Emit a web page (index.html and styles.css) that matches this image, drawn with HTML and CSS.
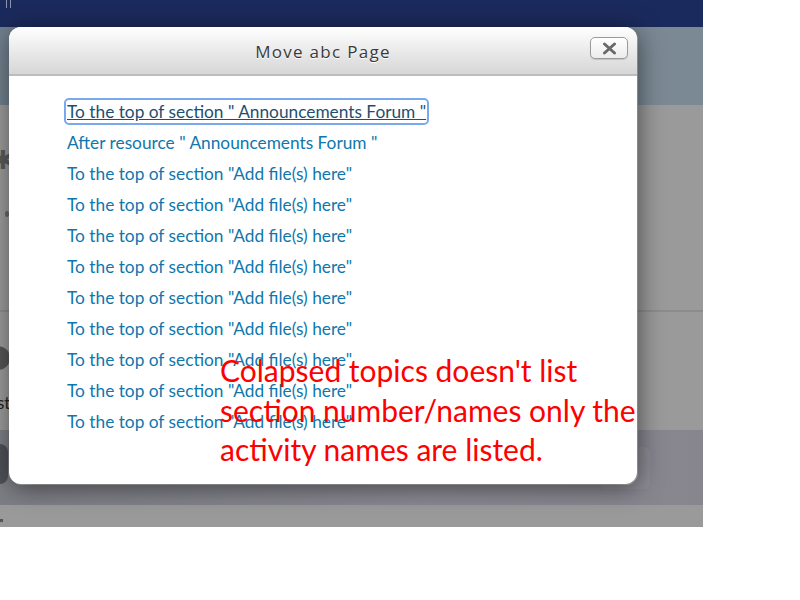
FILE: index.html
```html
<!DOCTYPE html>
<html lang="en">
<head>
    <meta charset="UTF-8">
    <title>Move abc Page</title>
    <link rel="stylesheet" href="styles.css">
</head>
<body>
    <div class="page">
        <div class="navbar"><span class="nav-mark"></span></div>
        <div class="banner"></div>
        <div class="course">
            <div class="course-row">
                <span class="gear">✱</span>
                <span class="dot"></span>
            </div>
            <div class="course-row second">
                <span class="blob"></span>
                <span class="st">st</span>
            </div>
        </div>
        <div class="footer-band">
            <span class="blob dark"></span>
            <span class="ghost-btn"></span>
        </div>
        <div class="footer-end"><span class="tiny-dot"></span></div>
    </div>

    <div class="dialog">
        <div class="dialog-header">
            <h1>Move abc Page</h1>
            <button class="close-btn">
                <svg width="15" height="13" viewBox="0 0 15 13"><path d="M2.5 2 L12.5 11 M12.5 2 L2.5 11" stroke="#6a6a6a" stroke-width="3" stroke-linecap="round"/></svg>
            </button>
        </div>
        <ul class="move-list">
            <li><a href="#" class="focused">To the top of section " Announcements Forum "</a></li>
            <li><a href="#">After resource " Announcements Forum "</a></li>
            <li><a href="#">To the top of section "Add file(s) here"</a></li>
            <li><a href="#">To the top of section "Add file(s) here"</a></li>
            <li><a href="#">To the top of section "Add file(s) here"</a></li>
            <li><a href="#">To the top of section "Add file(s) here"</a></li>
            <li><a href="#">To the top of section "Add file(s) here"</a></li>
            <li><a href="#">To the top of section "Add file(s) here"</a></li>
            <li><a href="#">To the top of section "Add file(s) here"</a></li>
            <li><a href="#">To the top of section "Add file(s) here"</a></li>
            <li><a href="#">To the top of section "Add file(s) here"</a></li>
        </ul>
    </div>

    <div class="note">Colapsed topics doesn't list<br>section number/names only the<br>activity names are listed.</div>
</body>
</html>
```

FILE: styles.css
```css
body {
    margin: 0;
    background: #fff;
    font-family: Lato, "Open Sans", sans-serif;
}
.page {
    width: 703px;
    height: 527px;
    display: flex;
    flex-direction: column;
    background: #9a9a9a;
    overflow: hidden;
}
.navbar {
    height: 27px;
    background: #1b2a5c;
    position: relative;
}
.nav-mark {
    display: block;
    width: 3px;
    height: 8px;
    margin-left: 6px;
    border-left: 1px solid #8a93b0;
    border-right: 1px solid #8a93b0;
}
.banner {
    height: 78px;
    background: linear-gradient(90deg, #6f7f8c, #7b8a97 60%, #7b8994);
}
.course {
    flex: 1;
    display: flex;
    flex-direction: column;
}
.course-row {
    height: 205px;
    border-bottom: 2px solid #8c8c8c;
    position: relative;
}
.course-row.second {
    height: auto;
    flex: 1;
    border-bottom: none;
}
.gear {
    position: absolute;
    left: -8px;
    top: 38px;
    font-size: 26px;
    color: #5a5a5a;
}
.dot {
    position: absolute;
    left: 5px;
    top: 106px;
    width: 4px;
    height: 6px;
    border-radius: 50%;
    background: #666;
}
.blob {
    position: absolute;
    left: -14px;
    top: 34px;
    width: 24px;
    height: 24px;
    border-radius: 50%;
    background: #555;
}
.st {
    position: absolute;
    left: -3px;
    top: 80px;
    font-size: 17px;
    color: #222;
}
.footer-band {
    height: 75px;
    background: linear-gradient(90deg, #7d7d85, #8a8993 60%, #87868f);
    position: relative;
}
.blob.dark {
    top: 14px;
    left: -12px;
    width: 20px;
    height: 40px;
    border-radius: 8px;
    background: #505058;
}
.ghost-btn {
    position: absolute;
    left: 600px;
    top: 17px;
    width: 50px;
    height: 42px;
    border-radius: 6px;
    background: #8d8c95;
}
.footer-end {
    height: 22px;
    background: #9a9a9a;
    position: relative;
}
.tiny-dot {
    position: absolute;
    left: 0;
    top: 14px;
    width: 3px;
    height: 3px;
    background: #555;
}

.dialog {
    position: absolute;
    left: 9px;
    top: 27px;
    width: 628px;
    height: 457px;
    background: #fff;
    border-radius: 12px;
    box-shadow: 2px 4px 24px rgba(0, 0, 0, 0.5), 1px 1px 0 #bbb;
    overflow: hidden;
}
.dialog-header {
    height: 47px;
    background: linear-gradient(#ffffff, #d6d6d6);
    border-bottom: 2px solid #bdbdbd;
    display: flex;
    align-items: center;
    justify-content: center;
    position: relative;
}
.dialog-header h1 {
    margin: 2px 0 0;
    font-family: "Open Sans", sans-serif;
    font-size: 17px;
    font-weight: normal;
    letter-spacing: 1.3px;
    color: #3a3a3a;
    text-shadow: 0 1px 0 #fff;
}
.close-btn {
    position: absolute;
    right: 9px;
    top: 10px;
    width: 38px;
    height: 22px;
    border: 1px solid #9a9a9a;
    border-radius: 5px;
    background: linear-gradient(#fff, #ececec);
    box-shadow: inset 0 1px 0 #fff, 0 1px 1px rgba(0,0,0,0.15);
    padding: 0;
    display: flex;
    align-items: center;
    justify-content: center;
}
.move-list {
    list-style: none;
    margin: 0;
    padding: 20px 0 0 58px;
}
.move-list li {
    height: 31px;
    line-height: 31px;
}
.move-list a {
    color: #0f77ad;
    text-decoration: none;
    font-size: 17.3px;
}
.move-list a.focused {
    color: #1e4f70;
    text-decoration: underline;
    outline: 2px solid #7aa9ee;
    outline-offset: 1px;
    border-radius: 2px;
}
.note {
    position: absolute;
    left: 220px;
    top: 351px;
    font-family: Lato, "Open Sans", sans-serif;
    font-size: 30px;
    line-height: 39.5px;
    color: #ff0000;
}
```
